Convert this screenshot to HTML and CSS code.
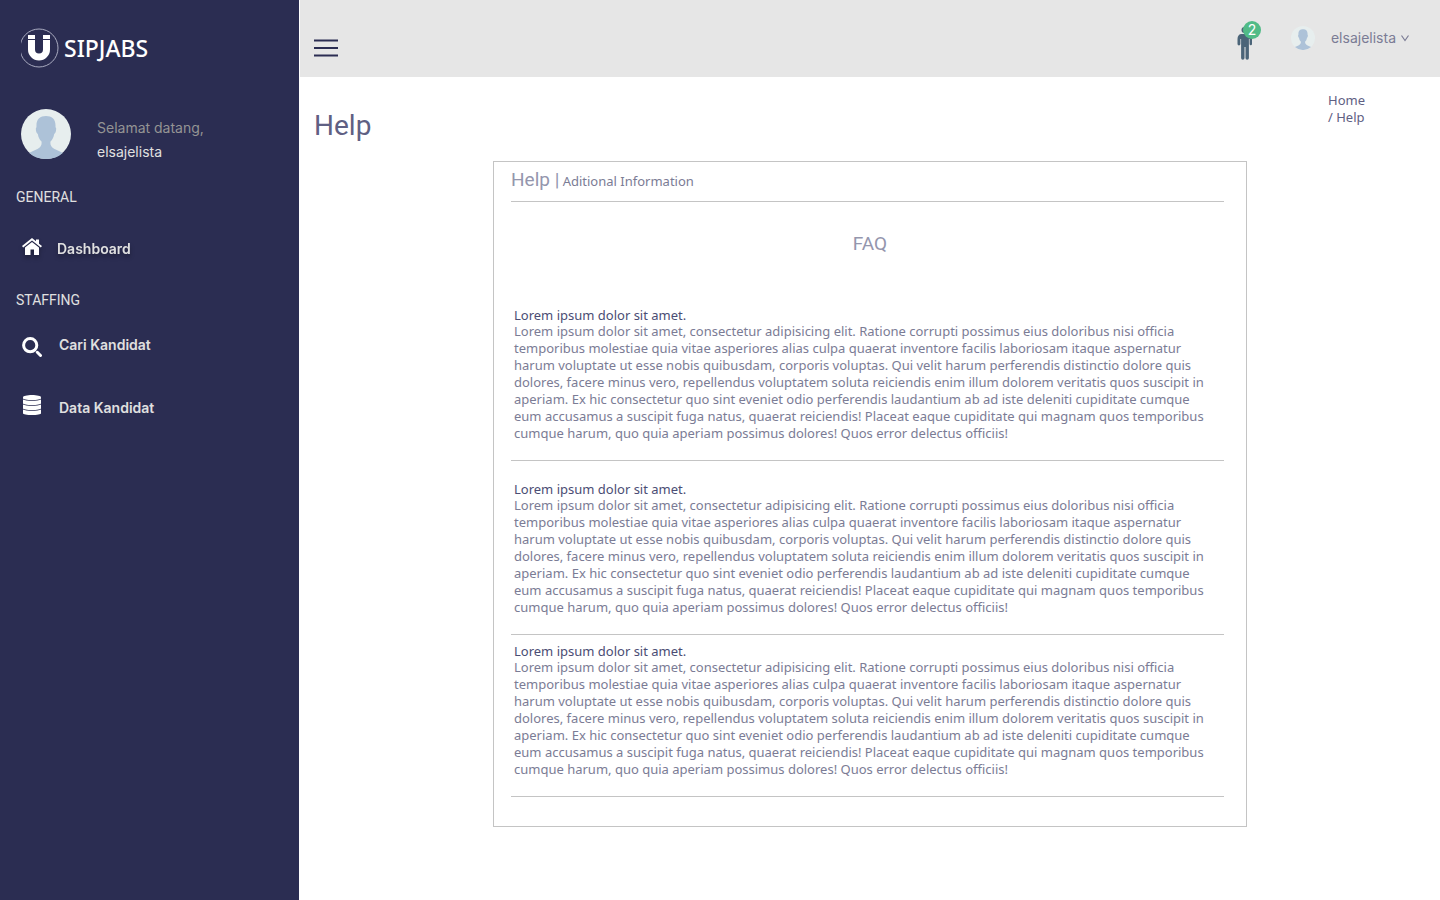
FILE: index.html
```html
<!DOCTYPE html>
<html lang="id">
<head>
<meta charset="utf-8">
<meta name="viewport" content="width=device-width, initial-scale=1">
<title>SIPJABS - Help</title>
<link rel="stylesheet" href="styles.css">
</head>
<body>
<svg class="defs" width="0" height="0" aria-hidden="true">
  <symbol id="avatar" viewBox="0 0 50 50">
    <circle cx="25" cy="25" r="25" fill="#e7eeee"/>
    <path fill="#adc2d8" d="M25 7c-6 0-10 3-9.500 11l-.7 1.500c0 3 .9 5 2 5.500.6 3.500 2 6 3.700 7.500.5 3.500-.5 5.500-4 7.500-3 1.500-6 2.500-8.300 4A25 25 0 0 0 25 50a25 25 0 0 0 16.800-6c-2.300-1.500-5.300-2.500-8.300-4-3.500-2-4.500-4-4-7.500 1.700-1.500 3.100-4 3.700-7.500 1.100-.5 2-2.500 2-5.500l-.7-1.500C35 10 31 7 25 7z"/>
  </symbol>
</svg>
<div class="app">
  <aside class="sidebar">
    <a class="logo" href="#">
      <svg width="38" height="40" viewBox="0 0 38 40" aria-hidden="true">
        <circle cx="18" cy="20" r="19" fill="none" stroke="#a9abc0" stroke-width="1"/>
        <path fill="#fff" d="M7 7h7v4H7zM22 7h7v4h-7zM7 12h7v9.500a4 4 0 0 0 8 0V12h7v9.500a11 11 0 0 1-22 0z"/>
      </svg>
      <span>SIPJABS</span>
    </a>
    <div class="welcome">
      <svg width="50" height="50" aria-hidden="true"><use href="#avatar"/></svg>
      <div>
        <div class="greeting">Selamat datang,</div>
        <div>elsajelista</div>
      </div>
    </div>
    <nav class="menu">
      <h2>GENERAL</h2>
      <a class="active" href="#">
        <svg width="20" height="22" viewBox="0 0 20 22" aria-hidden="true">
          <path fill="#fff" d="M10 0l4 3.200V1.500h3v4.200l3 2.400-1.200 1.500L10 2.600l-8.800 7L0 8.100z"/>
          <path fill="#fff" d="M10 4l7 5.600V17h-5v-5.500H8.500V17H3v-7.400z"/>
        </svg>
        <span>Dashboard</span>
      </a>
      <h2 class="second">STAFFING</h2>
      <a href="#">
        <svg width="20" height="24" viewBox="0 0 20 24" aria-hidden="true">
          <circle cx="8.200" cy="12.200" r="6.600" fill="none" stroke="#fff" stroke-width="3"/>
          <path d="M15.300 19.300l3.200 3.200" stroke="#fff" stroke-width="3" stroke-linecap="round"/>
        </svg>
        <span>Cari Kandidat</span>
      </a>
      <a class="data" href="#">
        <svg width="20" height="26" viewBox="0 0 20 26" aria-hidden="true">
          <g fill="#fff">
            <path d="M10 0c5 0 9 1 9 2.200v1C19 4.300 15 5 10 5S1 4.300 1 3.200v-1C1 1 5 0 10 0z"/>
            <path id="disk" d="M1 4.500C2.500 5.400 6 5.700 10 5.700s7.500-.3 9-1.200v3.700C19 9.300 15 10 10 10s-9-.7-9-1.800z"/>
            <use href="#disk" y="5"/>
            <use href="#disk" y="10"/>
          </g>
        </svg>
        <span>Data Kandidat</span>
      </a>
    </nav>
  </aside>
  <div class="page">
    <header class="topbar">
      <button class="burger" type="button" aria-label="Menu">
        <svg width="24" height="20" viewBox="0 0 24 20"><path d="M0 2.500h24M0 10h24M0 17.500h24" stroke="#2b2d52" stroke-width="2"/></svg>
      </button>
      <div class="account">
        <button class="notice" type="button" aria-label="Notifikasi">
          <svg width="16" height="34" viewBox="0 0 16 34">
            <g fill="#4b6478">
              <circle cx="7.500" cy="3" r="3"/>
              <path d="M4.500 7h6C13.500 7 15 9 15 12v5a1.200 1.200 0 0 1-2.400 0v-5h-.7v19a1.600 1.600 0 0 1-3.400 0V20h-1v11a1.600 1.600 0 0 1-3.400 0V12h-.7v5A1.200 1.200 0 0 1 0.500 17v-5c0-3 1.500-5 4-5z"/>
            </g>
          </svg>
          <span class="badge">2</span>
        </button>
        <button class="user" type="button">
          <svg width="24" height="24" aria-hidden="true"><use href="#avatar"/></svg>
          <span>elsajelista</span>
          <svg class="chevron" width="8" height="8" viewBox="0 0 8 8" aria-hidden="true"><path d="M.5 1.500L4 6.500l3.500-5" fill="none" stroke="#7b7c95" stroke-width="1.200"/></svg>
        </button>
      </div>
    </header>
    <main>
      <div class="heading">
        <h1>Help</h1>
        <nav class="crumbs" aria-label="Breadcrumb"><a href="#">Home</a><span>/ Help</span></nav>
      </div>
      <section class="card">
        <div class="card-head"><span class="card-title">Help |</span> <span>Aditional Information</span></div>
        <h2 class="faq">FAQ</h2>
        <article>
          <h3>Lorem ipsum dolor sit amet.</h3>
          <p>Lorem ipsum dolor sit amet, consectetur adipisicing elit. Ratione corrupti possimus eius doloribus nisi officia temporibus molestiae quia vitae asperiores alias culpa quaerat inventore facilis laboriosam itaque aspernatur harum voluptate ut esse nobis quibusdam, corporis voluptas. Qui velit harum perferendis distinctio dolore quis dolores, facere minus vero, repellendus voluptatem soluta reiciendis enim illum dolorem veritatis quos suscipit in aperiam. Ex hic consectetur quo sint eveniet odio perferendis laudantium ab ad iste deleniti cupiditate cumque eum accusamus a suscipit fuga natus, quaerat reiciendis! Placeat eaque cupiditate qui magnam quos temporibus cumque harum, quo quia aperiam possimus dolores! Quos error delectus officiis!</p>
        </article>
        <article class="spaced">
          <h3>Lorem ipsum dolor sit amet.</h3>
          <p>Lorem ipsum dolor sit amet, consectetur adipisicing elit. Ratione corrupti possimus eius doloribus nisi officia temporibus molestiae quia vitae asperiores alias culpa quaerat inventore facilis laboriosam itaque aspernatur harum voluptate ut esse nobis quibusdam, corporis voluptas. Qui velit harum perferendis distinctio dolore quis dolores, facere minus vero, repellendus voluptatem soluta reiciendis enim illum dolorem veritatis quos suscipit in aperiam. Ex hic consectetur quo sint eveniet odio perferendis laudantium ab ad iste deleniti cupiditate cumque eum accusamus a suscipit fuga natus, quaerat reiciendis! Placeat eaque cupiditate qui magnam quos temporibus cumque harum, quo quia aperiam possimus dolores! Quos error delectus officiis!</p>
        </article>
        <article>
          <h3>Lorem ipsum dolor sit amet.</h3>
          <p>Lorem ipsum dolor sit amet, consectetur adipisicing elit. Ratione corrupti possimus eius doloribus nisi officia temporibus molestiae quia vitae asperiores alias culpa quaerat inventore facilis laboriosam itaque aspernatur harum voluptate ut esse nobis quibusdam, corporis voluptas. Qui velit harum perferendis distinctio dolore quis dolores, facere minus vero, repellendus voluptatem soluta reiciendis enim illum dolorem veritatis quos suscipit in aperiam. Ex hic consectetur quo sint eveniet odio perferendis laudantium ab ad iste deleniti cupiditate cumque eum accusamus a suscipit fuga natus, quaerat reiciendis! Placeat eaque cupiditate qui magnam quos temporibus cumque harum, quo quia aperiam possimus dolores! Quos error delectus officiis!</p>
        </article>
      </section>
    </main>
  </div>
</div>
</body>
</html>
```
FILE: styles.css
```css
* { box-sizing: border-box; }
body { margin: 0; background: #fff; color: #7b7c95; font: 13px/17px "Noto Sans", sans-serif; }
h1, h2, h3, p { margin: 0; font-weight: 400; }
a { color: inherit; text-decoration: none; }
button { padding: 0; border: 0; background: none; color: inherit; font: inherit; cursor: pointer; }
svg { display: block; flex: none; }
.defs { position: absolute; }

.app { display: flex; min-height: 100vh; }
.sidebar { flex: none; width: 299px; padding: 28px 16px; background: #2b2d52; color: #e0e0e0; font: 14px/24px Inter, sans-serif; }
.logo { display: flex; align-items: center; gap: 5px; height: 40px; padding-left: 5px; color: #fff; font: 500 23px/40px "Noto Sans", sans-serif; }
.welcome { display: flex; gap: 26px; margin-top: 41px; padding-left: 5px; }
.welcome > div { padding-top: 7px; }
.greeting { color: #949494; }
.menu { display: flex; flex-direction: column; margin-top: 21px; }
.menu h2 { font: 14px/24px Roboto, sans-serif; }
.menu a { display: flex; align-items: center; gap: 17px; padding-left: 6px; font-weight: 600; }
.menu .active { gap: 15px; margin-top: 28px; filter: drop-shadow(0 3px 2px rgba(0, 0, 0, .3)); }
.menu .second { margin: 27px 0 21px; }
.menu .data { margin-top: 38px; }

.page { flex: 1; min-width: 0; margin-left: 1px; }
.topbar { display: flex; justify-content: space-between; align-items: center; height: 77px; padding: 0 31px 0 14px; background: #e6e6e6; }
.burger { padding-top: 18px; }
.account { display: flex; align-items: center; gap: 38px; font: 14px/24px Inter, sans-serif; }
.notice { position: relative; padding-top: 10px; }
.badge { position: absolute; left: 6px; top: 4px; width: 18px; height: 18px; border-radius: 50%; background: #51bb87; color: #fff; line-height: 18px; text-align: center; }
.user { display: flex; align-items: center; gap: 16px; padding-bottom: 2px; }
.chevron { margin-left: -11px; }

.heading { display: flex; justify-content: space-between; padding: 15px 75px 0 14px; }
.heading h1 { padding-top: 16px; color: #5f6083; font: 28px/36px Roboto, sans-serif; }
.crumbs { display: flex; flex-direction: column; color: #5f6083; }
.card { max-width: 754px; margin: 17px auto 0; padding: 0 22px 29px 17px; border: 1px solid #c4c4c4; }
.card-head { height: 40px; padding-top: 6px; border-bottom: 1px solid #c4c4c4; line-height: 24px; }
.card-title, .faq { color: #9496ad; font: 19px/24px Roboto, sans-serif; }
.card .faq { margin: 30px 0 51px; padding-left: 5px; text-align: center; }
.card article { padding: 0 3px 18px; border-bottom: 1px solid #c4c4c4; }
.card article + article { padding-top: 8px; }
.card .spaced.spaced { padding-top: 20px; }
.card h3 { color: #4b4d74; font-size: 13px; line-height: 16px; }
.card p { padding-right: 8px; }
```
